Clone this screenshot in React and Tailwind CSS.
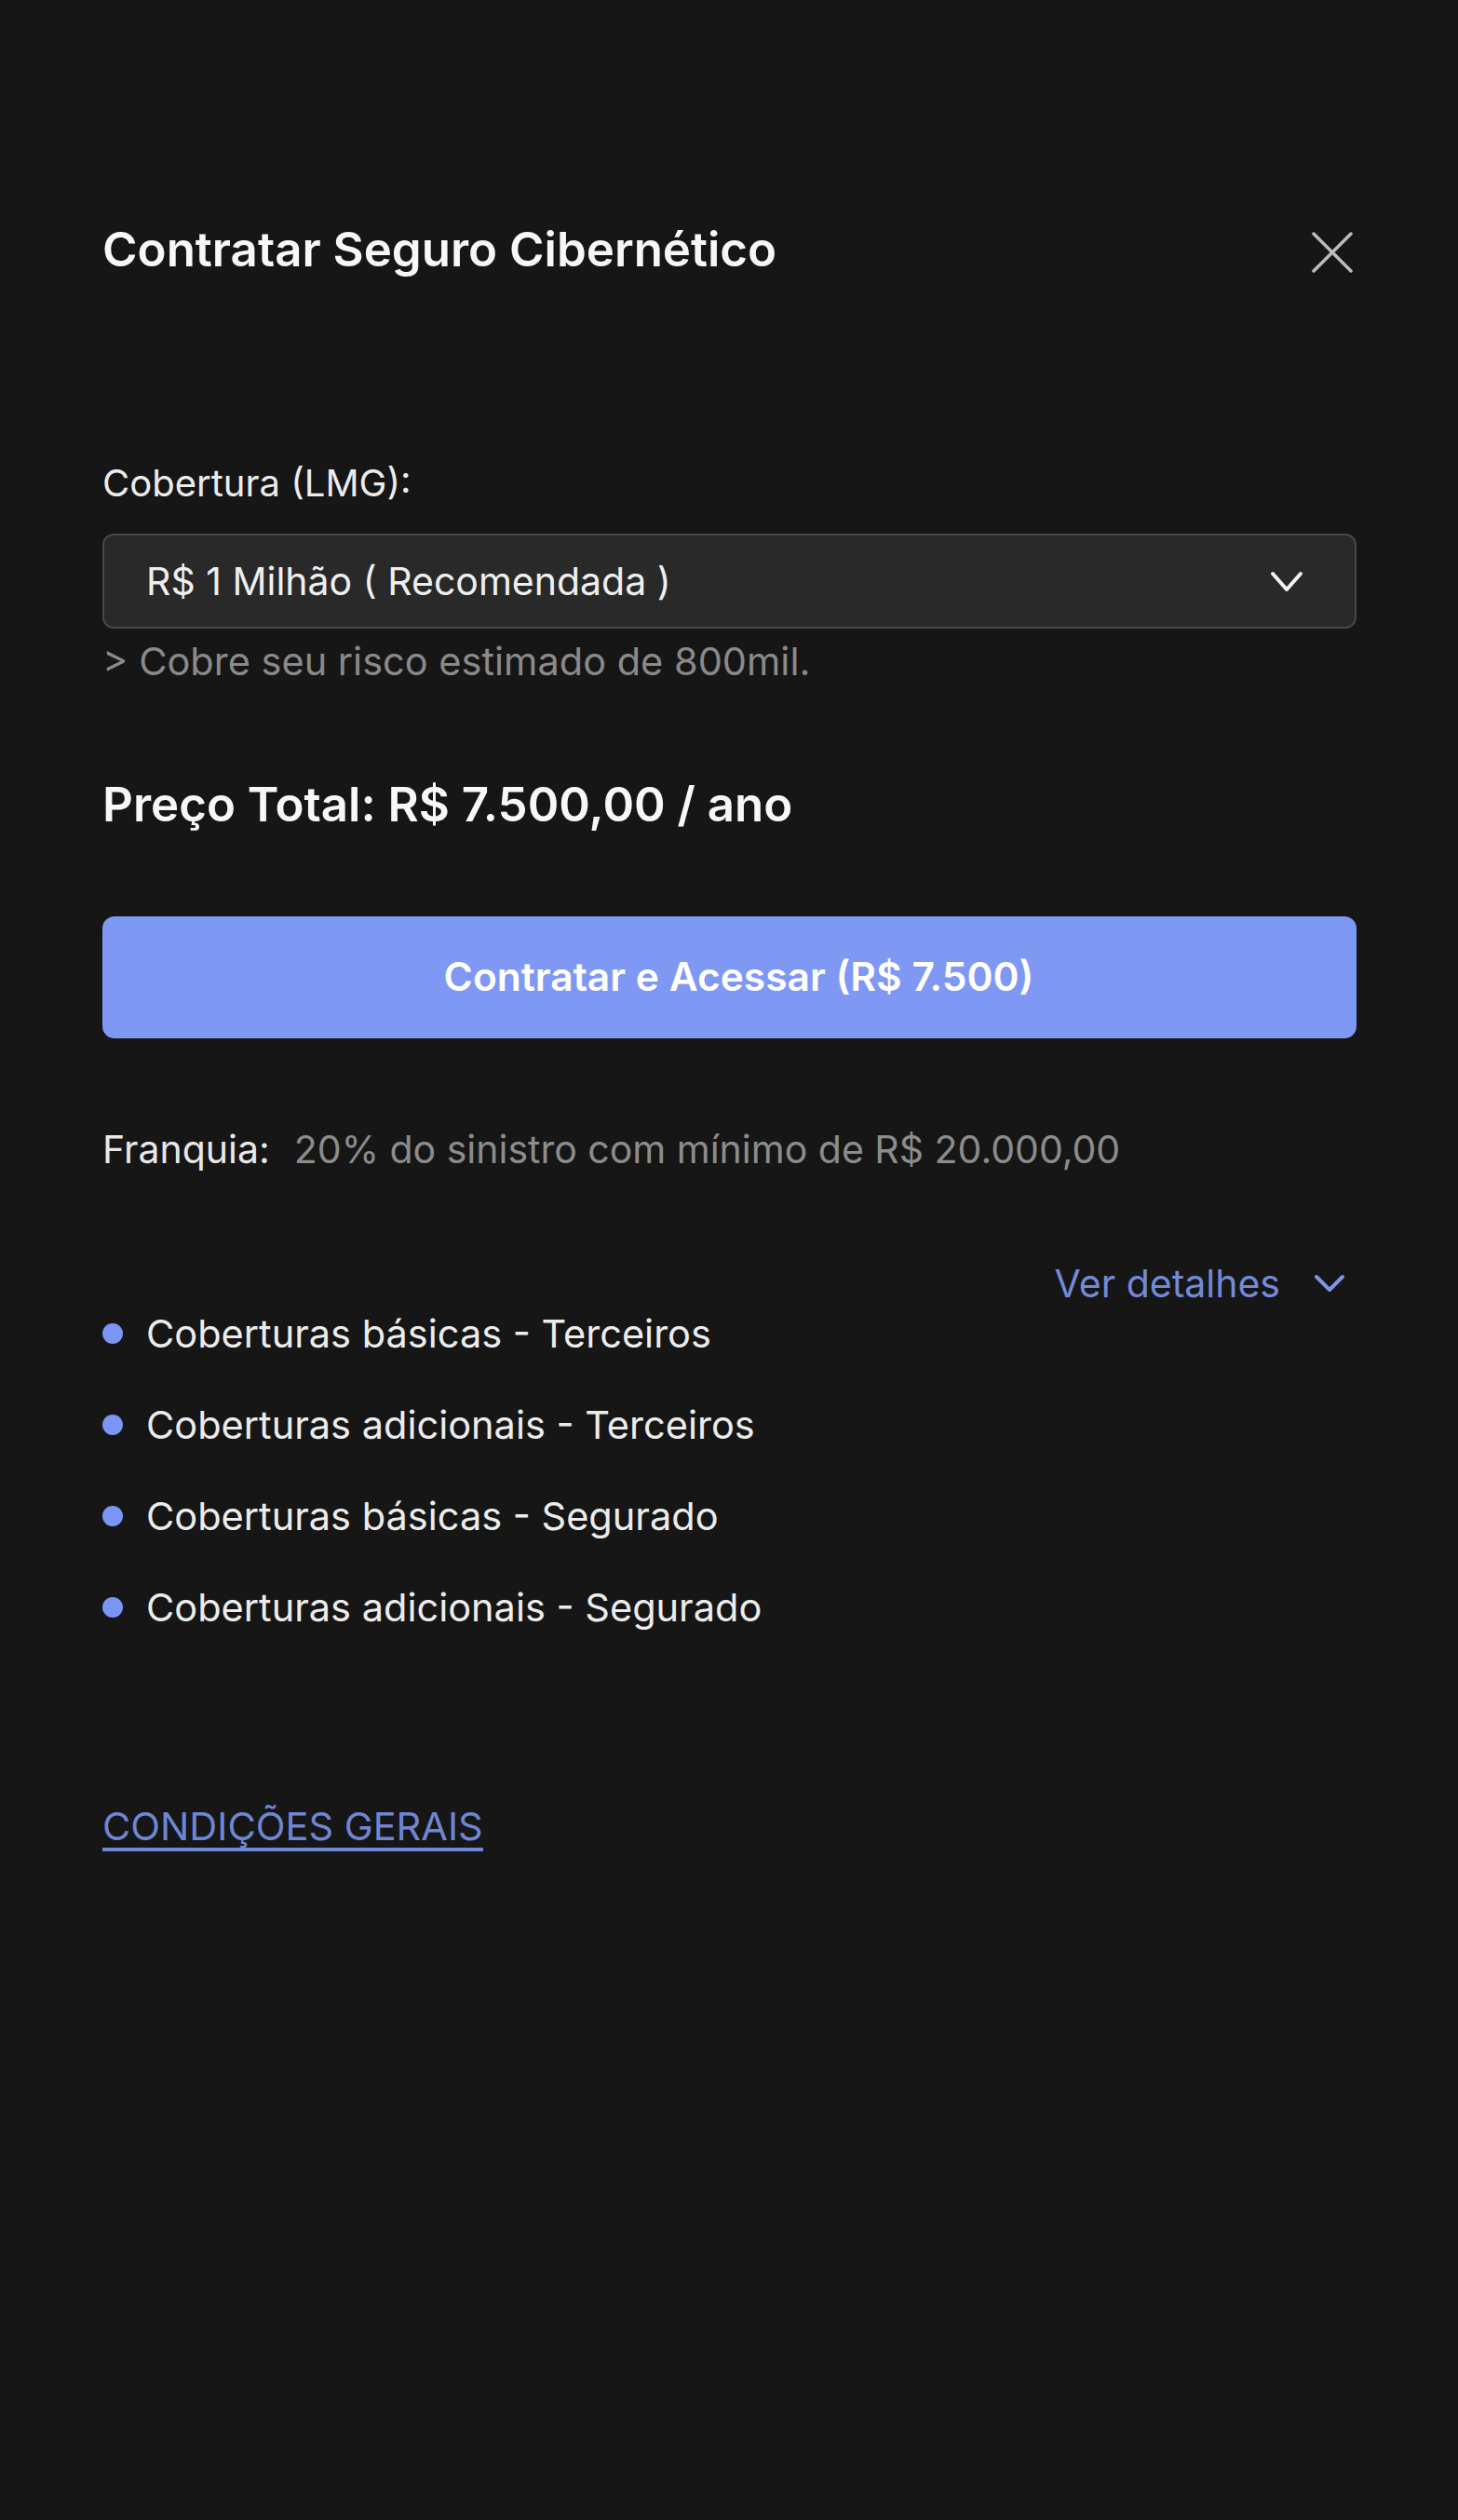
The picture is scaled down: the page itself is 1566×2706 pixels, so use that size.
import React from "react";

const F = { fontFamily: "Inter, 'Noto Sans', sans-serif" };

function Chevron({ className, color = "currentColor", w = 34, h = 21, sw = 4 }) {
  return (
    <svg width={w} height={h} viewBox={`0 0 ${w} ${h}`} className={className} fill="none">
      <path
        d={`M${sw / 2 + 1} ${sw / 2 + 1} L${w / 2} ${h - sw / 2 - 1} L${w - sw / 2 - 1} ${sw / 2 + 1}`}
        stroke={color}
        strokeWidth={sw}
        strokeLinecap="round"
        strokeLinejoin="round"
      />
    </svg>
  );
}

export default function App() {
  const items = [
    "Coberturas básicas - Terceiros",
    "Coberturas adicionais - Terceiros",
    "Coberturas básicas - Segurado",
    "Coberturas adicionais - Segurado",
  ];
  return (
    <div className="min-h-[2706px] w-full bg-[#161616]" style={F}>
      <div className="pl-[110px] pr-[109px] pt-[242px]">
        <div className="flex items-start justify-between">
          <h1 className="text-[51px] font-semibold leading-none text-[#f7f7f7]">Contratar Seguro Cibernético</h1>
          <svg width="44" height="44" viewBox="0 0 44 44" fill="none" className="mr-[4px] mt-[7px]">
            <path d="M2 2 L42 42 M42 2 L2 42" stroke="#bdbdbd" strokeWidth="3.5" strokeLinecap="round" />
          </svg>
        </div>

        <div className="mt-[206px] text-[40px] leading-none text-[#ececec]">Cobertura (LMG):</div>

        <div className="mt-[34px] flex h-[102px] items-center justify-between rounded-[12px] border-2 border-[#474747] bg-[#292929] pl-[45px] pr-[55px]">
          <span className="text-[41px] leading-none text-[#efefef]">R$ 1 Milhão ( Recomendada )</span>
          <Chevron color="#f2f2f2" w={36} h={23} />
        </div>

        <div className="mt-[15px] text-[41.5px] leading-none text-[#8a8a8a]">&gt; Cobre seu risco estimado de 800mil.</div>

        <div className="mt-[106px] text-[51px] font-semibold leading-none text-[#f7f7f7]">Preço Total: R$ 7.500,00 / ano</div>

        <button className="mt-[95px] flex h-[131px] w-full items-center justify-center rounded-[13px] bg-[#7f98f4] pl-[20px] text-[42.5px] font-semibold leading-none text-white">
          Contratar e Acessar (R$ 7.500)
        </button>

        <div className="mt-[99px] flex text-[41px] leading-none">
          <span className="text-[#e8e8e8]">Franquia:</span>
          <span className="ml-[26px] text-[#8c8c8c]">20% do sinistro com mínimo de R$ 20.000,00</span>
        </div>

        <div className="mt-[103px] flex items-center justify-end pr-[12px] text-[41px] leading-none text-[#7489d8]">
          <span>Ver detalhes</span>
          <Chevron className="ml-[36px]" color="#7f95e6" w={34} h={20} sw={4} />
        </div>

        <ul className="mt-[13px] flex flex-col gap-[56.5px]">
          {items.map((t) => (
            <li key={t} className="flex items-center">
              <span className="h-[22px] w-[22px] shrink-0 rounded-full bg-[#7b95f5]" />
              <span className="ml-[25px] text-[41.5px] leading-none text-[#ececec]">{t}</span>
            </li>
          ))}
        </ul>

        <div className="mt-[193.5px]">
          <a
            href="#"
            className="inline-block border-b-[4px] border-[#6f86d4] pb-[1.5px] text-[41.5px] leading-none text-[#6f86d4]"
          >
            CONDIÇÕES GERAIS
          </a>
        </div>
      </div>
    </div>
  );
}
